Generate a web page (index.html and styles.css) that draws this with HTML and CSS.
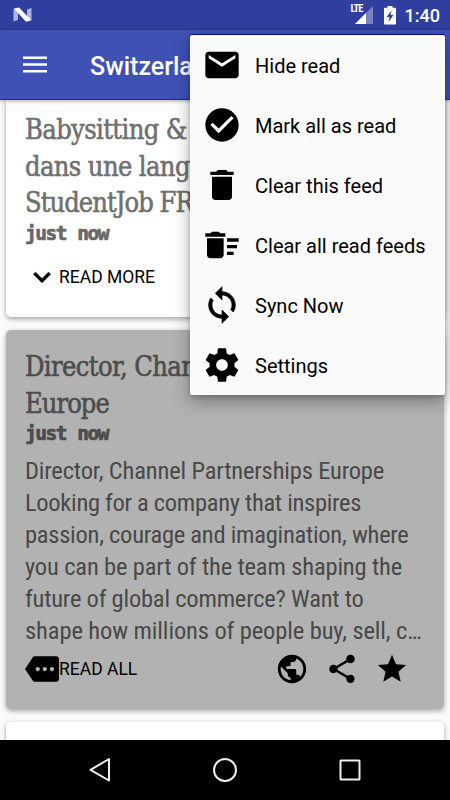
FILE: index.html
```
<!DOCTYPE html>
<html lang="en">
<head>
<meta charset="utf-8">
<title>Switzerland</title>
<link rel="stylesheet" href="styles.css">
</head>
<body>
<div class="screen">
  <header class="status">
    <svg class="logo" width="20" height="16" viewBox="0 0 20 16"><path fill="#aeb4dc" d="M.5 2 5 1v12L.5 14.500zM14 2.500l4.500-1.500v12.500L14 14.500z"/><path fill="#fff" d="M1 1.500 6 .5 18 13l-5 1.700z"/></svg>
    <div class="status-right">
      <svg class="signal" width="24" height="20" viewBox="0 0 24 20"><path fill="#7983c2" d="M23 1v18H5z"/><path fill="#fff" d="M16 8v11H5z"/></svg>
      <span class="lte">LTE</span>
      <svg class="battery" width="12" height="19" viewBox="0 0 12 19"><path fill="#fff" d="M3.500 0h5v1.700H11q1 0 1 1V17.500q0 1-1 1H1q-1 0-1-1V2.700q0-1 1-1h2.500z"/><path fill="#303f9f" d="M7.500 4.500 2.500 11H5.500l-1 5 5-7H6.500z"/></svg>
      <span class="clock">1:40</span>
    </div>
  </header>
  <div class="appbar">
    <svg class="burger" width="24" height="17" viewBox="0 0 24 17"><path fill="#fff" d="M0 .5h24V3H0zM0 7.300h24v2.400H0zM0 14h24v2.500H0z"/></svg>
    <h1>Switzerland</h1>
  </div>
  <main class="feed">
    <article class="card first">
      <h2>Babysitting &amp;<br>dans une langue<br><span class="tight">StudentJob FR</span></h2>
      <p class="time">just <span>now</span></p>
      <div class="actions">
        <svg class="icon" viewBox="0 0 24 24"><path stroke="#000" stroke-width=".5" d="M16.590 8.590 12 13.170 7.410 8.590 6 10l6 6 6-6z"/></svg>
        <span>READ MORE</span>
      </div>
    </article>
    <article class="card read">
      <h2>Director, Channel<br><span class="tight">Europe</span></h2>
      <p class="time">just <span>now</span></p>
      <p class="summary">
        <span>Director, Channel Partnerships Europe</span>
        <span>Looking for a company that inspires</span>
        <span>passion, courage and imagination, where</span>
        <span>you can be part of the team shaping the</span>
        <span>future of global commerce? Want to</span>
        <span>shape how millions of people buy, sell, c…</span>
      </p>
      <div class="actions">
        <svg class="icon" viewBox="0 0 24 24"><path d="M22 3H7c-.69 0-1.230.35-1.590.88L0 12l5.410 8.110c.36.53.9.89 1.590.89h15c1.100 0 2-.9 2-2V5c0-1.100-.9-2-2-2zM9 13.500c-.83 0-1.500-.67-1.500-1.500s.67-1.500 1.500-1.500 1.500.67 1.500 1.500-.67 1.500-1.500 1.500zm5 0c-.83 0-1.500-.67-1.500-1.500s.67-1.500 1.500-1.500 1.500.67 1.500 1.500-.67 1.500-1.500 1.500zm5 0c-.83 0-1.500-.67-1.500-1.500s.67-1.500 1.500-1.500 1.500.67 1.500 1.500-.67 1.500-1.500 1.500z"/></svg>
        <span>READ ALL</span>
        <div class="tools">
          <svg class="icon" viewBox="0 0 24 24"><path d="M12 2C6.480 2 2 6.480 2 12s4.480 10 10 10 10-4.480 10-10S17.520 2 12 2zm-1 17.930c-3.950-.49-7-3.850-7-7.930 0-.62.08-1.210.21-1.790L9 15v1c0 1.100.9 2 2 2v1.930zm6.900-2.540c-.26-.81-1-1.390-1.900-1.390h-1v-3c0-.55-.45-1-1-1H8v-2h2c.55 0 1-.45 1-1V7h2c1.100 0 2-.9 2-2v-.41c2.930 1.190 5 4.060 5 7.410 0 2.080-.8 3.970-2.100 5.390z"/></svg>
          <svg class="icon" viewBox="0 0 24 24"><path d="M18 16.080c-.76 0-1.440.3-1.960.77L8.910 12.700c.05-.23.09-.46.09-.7s-.04-.47-.09-.7l7.050-4.110c.54.5 1.250.81 2.040.81 1.660 0 3-1.340 3-3s-1.340-3-3-3-3 1.340-3 3c0 .24.04.47.09.7L8.040 9.810C7.500 9.310 6.790 9 6 9c-1.660 0-3 1.340-3 3s1.340 3 3 3c.79 0 1.500-.31 2.040-.81l7.120 4.160c-.05.21-.08.43-.08.65 0 1.610 1.310 2.920 2.920 2.920s2.920-1.310 2.920-2.920-1.310-2.920-2.920-2.920z"/></svg>
          <svg class="icon" viewBox="0 0 24 24"><path d="M12 17.270 18.180 21l-1.640-7.030L22 9.240l-7.190-.61L12 2 9.190 8.630 2 9.240l5.460 4.730L5.820 21z"/></svg>
        </div>
      </div>
    </article>
    <article class="card"></article>
  </main>
  <nav class="navbar">
    <svg width="24" height="28" viewBox="0 0 24 28"><path d="M21 3v21.500L2.500 13.800z"/></svg>
    <svg width="26" height="28" viewBox="0 0 26 28"><circle cx="13" cy="14" r="11"/></svg>
    <svg width="24" height="28" viewBox="0 0 24 28"><rect x="2.500" y="4.500" width="19" height="19" rx=".5"/></svg>
  </nav>
  <ul class="menu">
    <li><svg viewBox="0 0 24 24"><path d="M20 4H4c-1.100 0-1.990.9-1.990 2L2 18c0 1.100.9 2 2 2h16c1.100 0 2-.9 2-2V6c0-1.100-.9-2-2-2zm0 4-8 5-8-5V6l8 5 8-5z"/></svg><span>Hide read</span></li>
    <li><svg viewBox="0 0 24 24"><path d="M12 2C6.480 2 2 6.480 2 12s4.480 10 10 10 10-4.480 10-10S17.520 2 12 2zm-2 15-5-5 1.410-1.410L10 14.170l7.590-7.590L19 8z"/></svg><span>Mark all as read</span></li>
    <li><svg viewBox="0 0 24 24"><path d="M6 19c0 1.100.9 2 2 2h8c1.100 0 2-.9 2-2V7H6zM19 4h-3.500l-1-1h-5l-1 1H5v2h14z"/></svg><span>Clear this feed</span></li>
    <li><svg viewBox="0 0 24 24"><path d="M15 16h4v2h-4zm0-8h7v2h-7zm0 4h6v2h-6zM3 18c0 1.100.9 2 2 2h6c1.100 0 2-.9 2-2V8H3zM14 5h-3l-1-1H6L5 5H2v2h12z"/></svg><span>Clear all read feeds</span></li>
    <li><svg viewBox="0 0 24 24"><path stroke="#000" stroke-width=".4" d="M12 4V1L8 5l4 4V6c3.310 0 6 2.690 6 6 0 1.010-.25 1.970-.7 2.800l1.460 1.460C19.540 15.030 20 13.570 20 12c0-4.420-3.580-8-8-8zm0 14c-3.310 0-6-2.690-6-6 0-1.010.25-1.970.7-2.800L5.240 7.740C4.460 8.970 4 10.430 4 12c0 4.420 3.580 8 8 8v3l4-4-4-4z"/></svg><span>Sync Now</span></li>
    <li><svg viewBox="0 0 24 24"><path d="M19.430 12.980c.04-.32.07-.64.07-.98s-.03-.66-.07-.98l2.110-1.650c.19-.15.24-.42.12-.64l-2-3.460c-.12-.22-.39-.3-.61-.22l-2.490 1c-.52-.4-1.080-.73-1.690-.98l-.38-2.650C14.460 2.180 14.250 2 14 2h-4c-.25 0-.46.18-.49.42l-.38 2.650c-.61.25-1.170.59-1.690.98l-2.490-1c-.23-.09-.49 0-.61.22l-2 3.460c-.13.22-.07.49.12.64l2.110 1.650c-.04.32-.07.65-.07.98s.03.66.07.98l-2.110 1.650c-.19.15-.24.42-.12.64l2 3.460c.12.22.39.3.61.22l2.490-1c.52.4 1.080.73 1.690.98l.38 2.650c.03.24.24.42.49.42h4c.25 0 .46-.18.49-.42l.38-2.650c.61-.25 1.170-.59 1.690-.98l2.490 1c.23.09.49 0 .61-.22l2-3.460c.12-.22.07-.49-.12-.64zM12 15.500c-1.930 0-3.500-1.570-3.500-3.500s1.570-3.500 3.500-3.500 3.500 1.570 3.500 3.500-1.570 3.500-3.500 3.500z"/></svg><span>Settings</span></li>
  </ul>
</div>
</body>
</html>
```
FILE: styles.css
```
* { box-sizing: border-box; }
body { margin: 0; font-family: Roboto, sans-serif; color: #000; }
h1, h2, p, ul { margin: 0; padding: 0; }
svg { display: block; flex: none; }

.screen {
  position: relative;
  width: 450px;
  height: 800px;
  overflow: hidden;
  display: flex;
  flex-direction: column;
  background: #fafafa;
}

.status {
  flex: none;
  height: 30px;
  padding: 0 10px 0 13px;
  display: flex;
  align-items: center;
  justify-content: space-between;
  background: #303f9f;
}
.status-right {
  position: relative;
  display: flex;
  align-items: center;
  color: #fff;
}
.lte {
  position: absolute;
  left: 1px;
  top: 0;
  font: 700 10.500px/12px "Roboto Condensed", Roboto, sans-serif;
  font-stretch: condensed;
  letter-spacing: -1px;
}
.signal { margin-right: 10px; }
.battery { margin-right: 9px; }
.clock { font-size: 18px; line-height: 22px; font-weight: 500; padding-top: 2px; }

.appbar {
  flex: none;
  position: relative;
  z-index: 1;
  height: 70px;
  padding-left: 23px;
  display: flex;
  align-items: center;
  gap: 43px;
  background: #3f51b5;
  border-bottom: 1px solid #16309c;
  box-shadow: 0 1px 4px rgba(0, 0, 0, .35);
}
.appbar h1 { font-size: 25px; line-height: 32px; font-weight: 500; color: #fff; padding-top: 4px; }

.feed {
  flex: 1;
  min-height: 0;
  overflow: hidden;
  padding: 0 6px;
  display: flex;
  flex-direction: column;
  gap: 13px;
}
.card {
  flex: none;
  height: 60px;
  padding: 19px 19px 0;
  border-radius: 5px;
  background: #fff;
  box-shadow: 0 2px 5px rgba(0, 0, 0, .35);
}
.first { height: 217px; padding-top: 12px; border-radius: 0 0 5px 5px; }
.read { height: 379px; background: #b2b2b2; }

.card h2 {
  font: 27px/36.5px "DejaVu Serif", serif;
  font-stretch: condensed;
  letter-spacing: -0.6px;
  color: #707070;
  -webkit-text-stroke: .55px currentColor;
  white-space: nowrap;
}
.card h2 .tight { letter-spacing: -0.95px; }
.time {
  font: bold 19.500px/24px "DejaVu Sans Mono", monospace;
  letter-spacing: -1.5px;
  color: #686868;
  -webkit-text-stroke: .7px currentColor;
}
.time span { margin-left: 1px; }
.read h2, .read .time { color: #4c4c4c; }

.summary {
  margin-top: 9px;
  font: 24.5px/32px "Roboto Condensed", Roboto, sans-serif;
  font-stretch: condensed;
  color: #484848;
}
.summary span { display: block; white-space: nowrap; }
.summary span:nth-child(1) { letter-spacing: -.16px; }
.summary span:nth-child(2) { letter-spacing: -.3px; }
.summary span:nth-child(3) { letter-spacing: -.26px; }
.summary span:nth-child(4) { letter-spacing: -.16px; }
.summary span:nth-child(5) { letter-spacing: -.21px; }
.summary span:nth-child(6) { letter-spacing: -.11px; }

.actions {
  display: flex;
  align-items: center;
  height: 44px;
  font-size: 17.500px;
  font-weight: 450;
}
.first .actions { margin-top: 9px; }
.icon { width: 34px; height: 34px; }
.tools { margin-left: auto; margin-right: 16px; display: flex; gap: 16px; }

.navbar {
  flex: none;
  height: 60px;
  display: flex;
  align-items: center;
  justify-content: center;
  gap: 100px;
  background: #000;
}
.navbar svg { fill: none; stroke: #eee; stroke-width: 2; stroke-linejoin: round; }

.menu {
  position: absolute;
  z-index: 2;
  left: 190px;
  top: 35px;
  width: 255px;
  list-style: none;
  background: #fafafa;
  border-radius: 2px;
  box-shadow: 0 -1px 0 #00108f, 0 7px 18px rgba(0, 0, 0, .3), 0 2px 5px rgba(0, 0, 0, .2);
}
.menu li {
  height: 60px;
  padding-left: 12px;
  display: flex;
  align-items: center;
  gap: 13px;
  font-size: 20px;
}
.menu span { padding-top: 2px; }
.menu svg { width: 40px; height: 40px; }
```
